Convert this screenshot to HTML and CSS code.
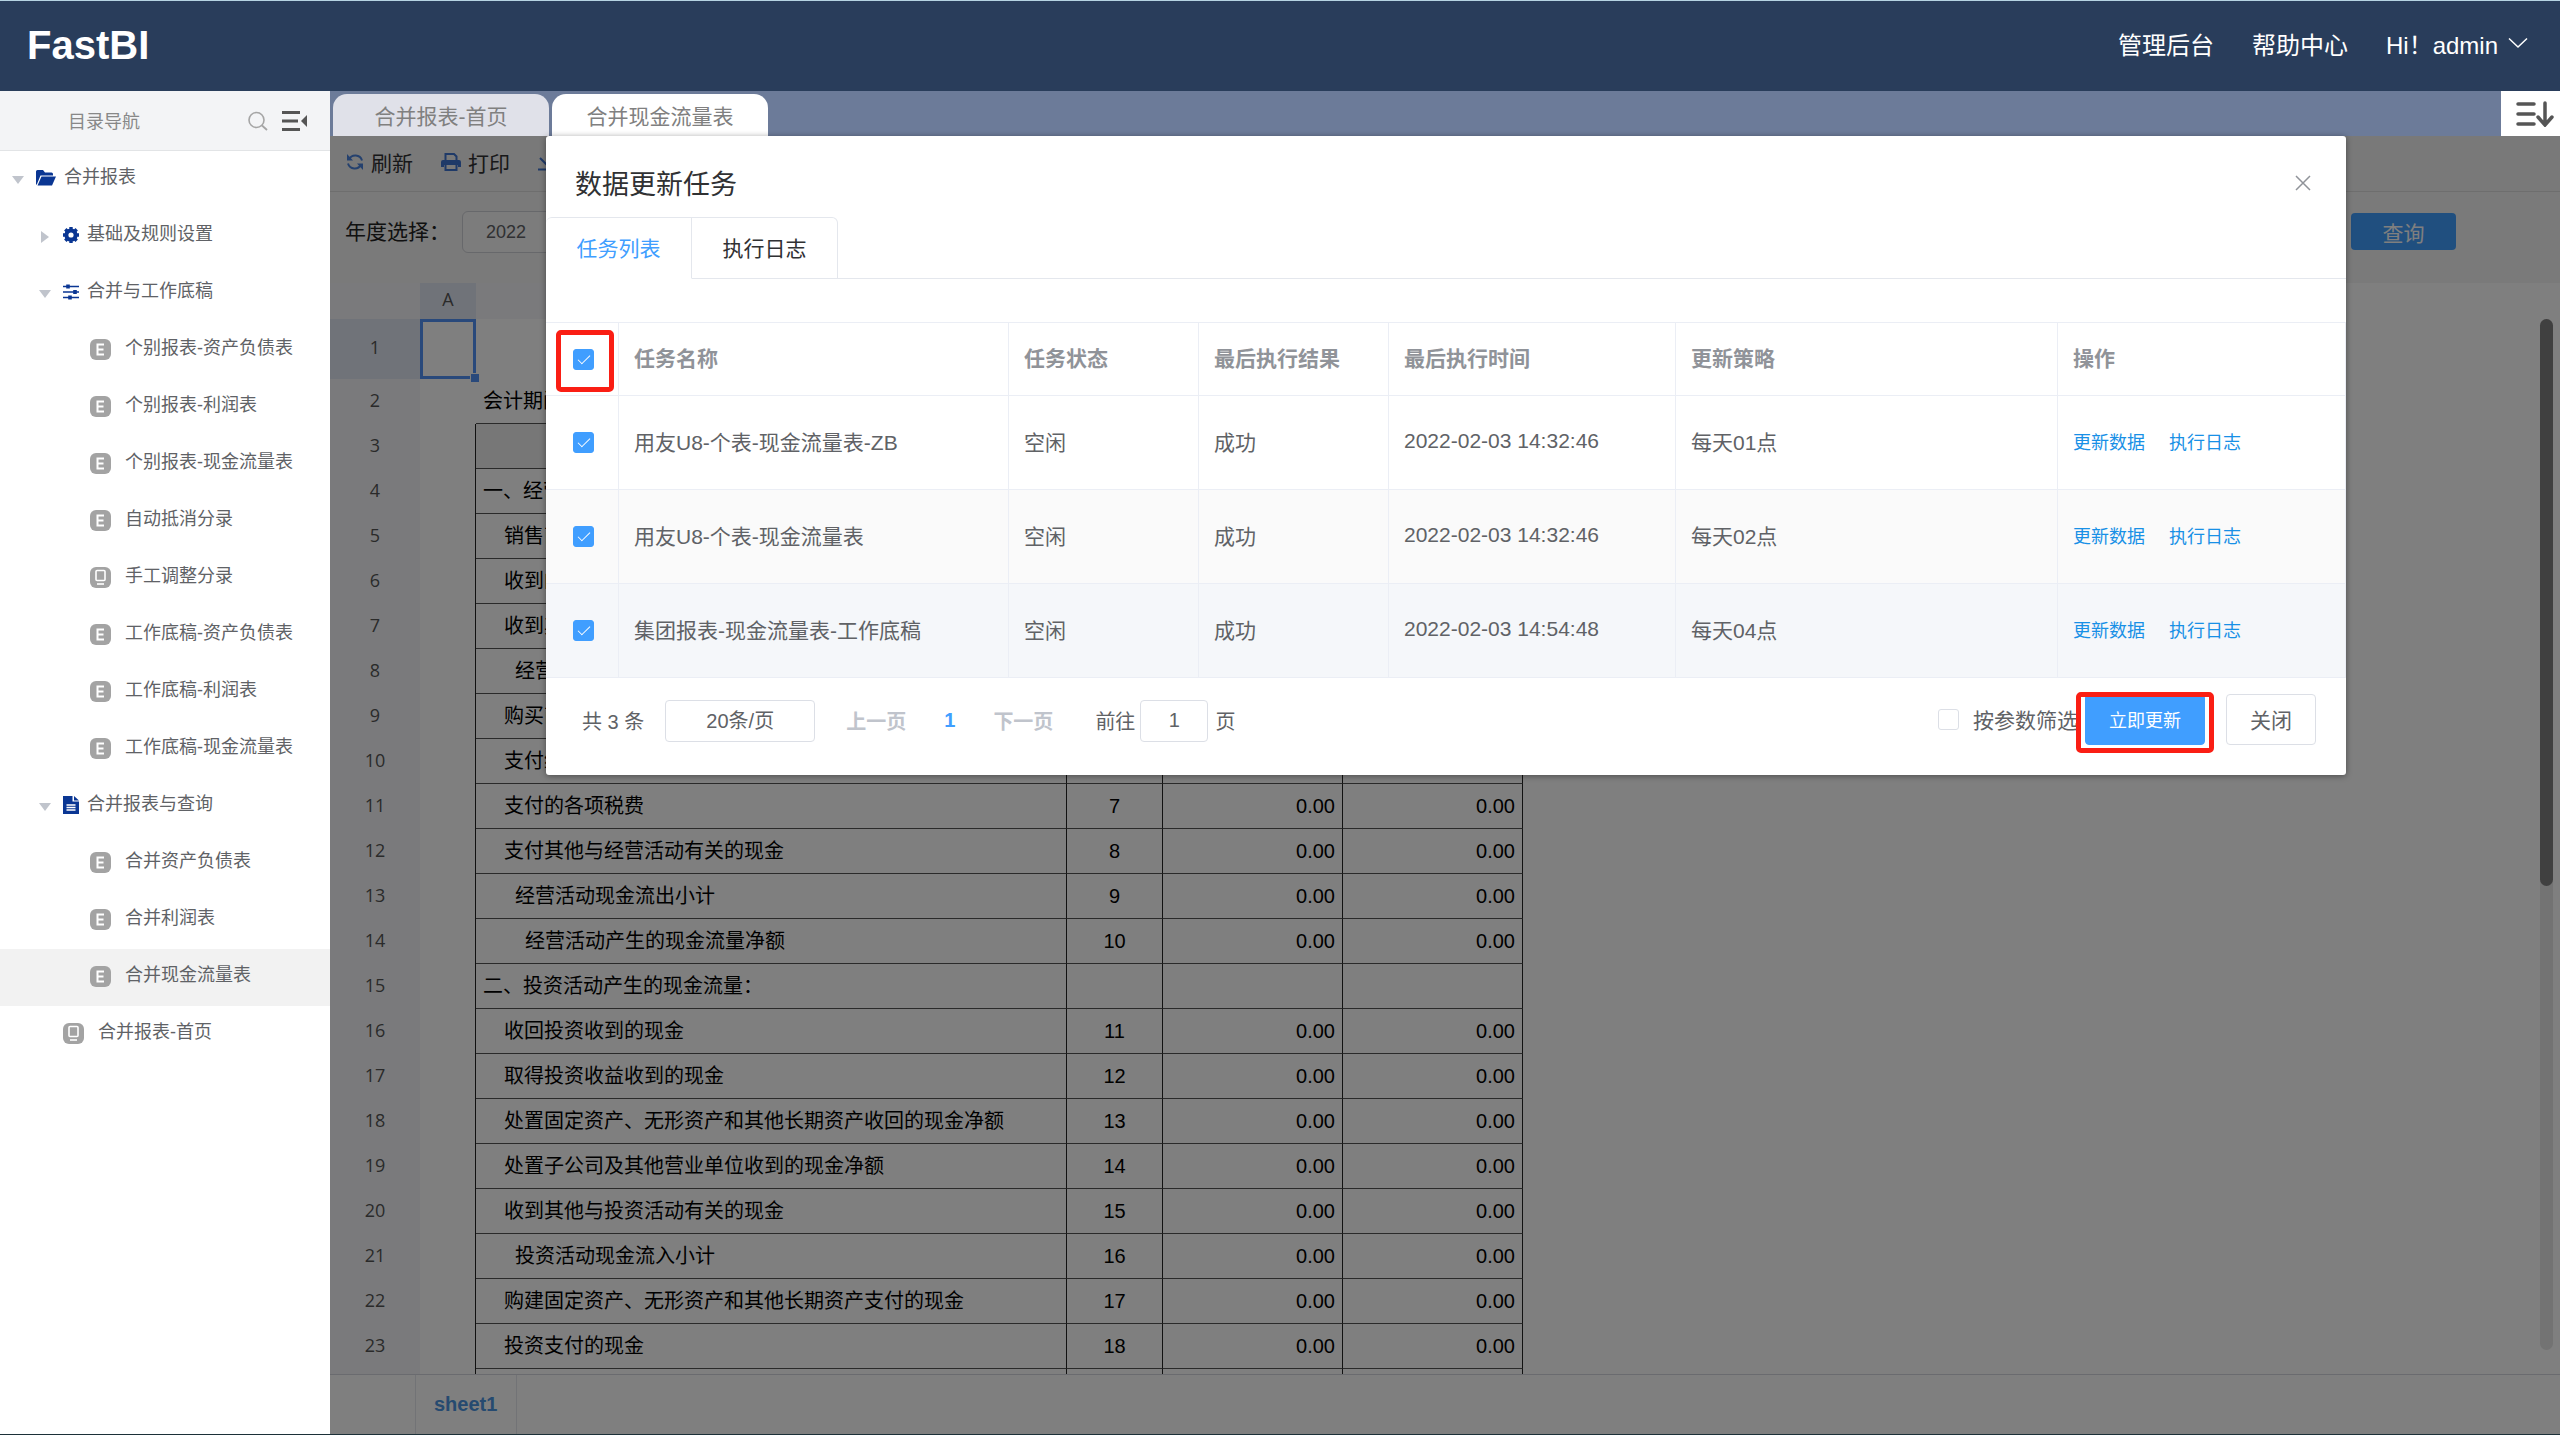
FILE: index.html
```html
<!DOCTYPE html>
<html lang="zh-CN">
<head>
    <meta charset="UTF-8">
    <title>FastBI</title>
    <link rel="stylesheet" href="styles.css">
</head>
<body>
    <!-- 公用图标 -->
    <svg class="sprite" aria-hidden="true">
        <symbol id="i-excel" viewBox="0 0 21 21">
            <rect width="21" height="21" rx="6" fill="#a3a3a3"/>
            <path d="M14 5.5H7.5v10H14M7.5 10.5h6" fill="none" stroke="#fff" stroke-width="2"/>
        </symbol>
        <symbol id="i-board" viewBox="0 0 21 21">
            <rect width="21" height="21" rx="6" fill="#a3a3a3"/>
            <rect x="6" y="3.5" width="9" height="10" rx="1" fill="none" stroke="#fff" stroke-width="1.6"/>
            <path d="M7 17h7" stroke="#fff" stroke-width="1.6"/>
        </symbol>
    </svg>

    <header class="topbar">
        <div class="logo">FastBI</div>
        <nav class="top-links">
            <a href="#">管理后台</a>
            <a href="#">帮助中心</a>
            <button type="button" class="user">Hi！admin
                <svg width="20" height="12" viewBox="0 0 20 12"><path d="M1 1.5l9 8.5 9-8.5" fill="none" stroke="#fff" stroke-width="1.5"/></svg>
            </button>
        </nav>
    </header>

    <div class="layout">
        <aside class="sidebar">
            <div class="side-head">
                <span class="side-title">目录导航</span>
                <button type="button" class="icon-btn" aria-label="搜索">
                    <svg width="20" height="20" viewBox="0 0 20 20"><circle cx="8.5" cy="9" r="7.5" fill="none" stroke="#a5a5a5" stroke-width="1.6"/><path d="M14 14.5l5 4.5" stroke="#a5a5a5" stroke-width="1.8"/></svg>
                </button>
                <button type="button" class="icon-btn" aria-label="收起">
                    <svg width="25" height="22" viewBox="0 0 25 22"><path d="M0 2.5h18M0 11h16M0 19.5h18" stroke="#555" stroke-width="3"/><path d="M25 5v12l-6-6z" fill="#555"/></svg>
                </button>
            </div>
            <nav class="tree">
                <a href="#" class="node lv1">
                    <i class="caret open"></i>
                    <svg width="20" height="16" viewBox="0 0 20 16"><path d="M0 15V1.500Q0 0 1.500 0H7l2 2.500h6.500Q17 2.500 17 4v1.500H4.500L1 14z" fill="#0a3693"/><path d="M5.500 6.500H20l-4 9H1.500z" fill="#0a3693"/></svg>
                    <span>合并报表</span>
                </a>
                <a href="#" class="node lv2">
                    <i class="caret"></i>
                    <svg width="16" height="16" viewBox="0 0 16 16"><circle cx="8" cy="8" r="4.600" fill="none" stroke="#0a3693" stroke-width="4"/><path d="M8 0v3M8 13v3M0 8h3M13 8h3M2.300 2.300l2.200 2.200M11.500 11.500l2.200 2.200M2.300 13.700l2.200-2.200M11.500 4.500l2.200-2.200" stroke="#0a3693" stroke-width="3.400"/></svg>
                    <span>基础及规则设置</span>
                </a>
                <a href="#" class="node lv2">
                    <i class="caret open"></i>
                    <svg width="16" height="16" viewBox="0 0 16 16"><path d="M0 2.500h16M0 8h16M0 13.500h16" stroke="#0a3693" stroke-width="1.600"/><path d="M5 .5v4M12 6v4M7 11.500v4" stroke="#0a3693" stroke-width="3.600"/></svg>
                    <span>合并与工作底稿</span>
                </a>
                <a href="#" class="node lv3"><svg width="21" height="21"><use href="#i-excel"/></svg><span>个别报表-资产负债表</span></a>
                <a href="#" class="node lv3"><svg width="21" height="21"><use href="#i-excel"/></svg><span>个别报表-利润表</span></a>
                <a href="#" class="node lv3"><svg width="21" height="21"><use href="#i-excel"/></svg><span>个别报表-现金流量表</span></a>
                <a href="#" class="node lv3"><svg width="21" height="21"><use href="#i-excel"/></svg><span>自动抵消分录</span></a>
                <a href="#" class="node lv3"><svg width="21" height="21"><use href="#i-board"/></svg><span>手工调整分录</span></a>
                <a href="#" class="node lv3"><svg width="21" height="21"><use href="#i-excel"/></svg><span>工作底稿-资产负债表</span></a>
                <a href="#" class="node lv3"><svg width="21" height="21"><use href="#i-excel"/></svg><span>工作底稿-利润表</span></a>
                <a href="#" class="node lv3"><svg width="21" height="21"><use href="#i-excel"/></svg><span>工作底稿-现金流量表</span></a>
                <a href="#" class="node lv2">
                    <i class="caret open"></i>
                    <svg width="16" height="18" viewBox="0 0 16 18"><path d="M0 0h9.500v5.500H16V18H0z" fill="#0a3693"/><path d="M11 0l5 4.500h-5z" fill="#0a3693"/><path d="M3.500 9h9M3.500 11.500h9M3.500 14h9" stroke="#fff" stroke-width="1.300"/></svg>
                    <span>合并报表与查询</span>
                </a>
                <a href="#" class="node lv3"><svg width="21" height="21"><use href="#i-excel"/></svg><span>合并资产负债表</span></a>
                <a href="#" class="node lv3"><svg width="21" height="21"><use href="#i-excel"/></svg><span>合并利润表</span></a>
                <a href="#" class="node lv3 current"><svg width="21" height="21"><use href="#i-excel"/></svg><span>合并现金流量表</span></a>
                <a href="#" class="node home"><svg width="21" height="21"><use href="#i-board"/></svg><span>合并报表-首页</span></a>
            </nav>
        </aside>

        <main class="main">
            <div class="page-tabs">
                <button type="button" class="page-tab">合并报表-首页</button>
                <button type="button" class="page-tab active">合并现金流量表</button>
                <button type="button" class="tab-menu" aria-label="标签列表">
                    <svg width="39" height="26" viewBox="0 0 39 26"><path d="M2 3h16M2 13h16M2 23h16" stroke="#555" stroke-width="3.500" stroke-linecap="round"/><path d="M29 2v21M22 16l7 8 7-8" fill="none" stroke="#555" stroke-width="3.500" stroke-linecap="round"/></svg>
                </button>
            </div>

            <div class="content">
                <div class="toolbar">
                    <button type="button" class="tool">
                        <svg width="18" height="18" viewBox="0 0 18 18"><path d="M3 6.500A7 7 0 0 1 16 7.500M15 11.500A7 7 0 0 1 2 10.500" fill="none" stroke="#4a82dc" stroke-width="2"/><path d="M1 1v6.500h6zM17 17v-6.500h-6z" fill="#4a82dc"/></svg>
                        <span>刷新</span>
                    </button>
                    <button type="button" class="tool">
                        <svg width="20" height="18" viewBox="0 0 20 18"><path d="M4.500 7V1H13l2.500 2.500V7" fill="none" stroke="#3f74d0" stroke-width="2"/><path d="M0 14V9q0-2 2-2h16q2 0 2 2v5h-3v-2H3v2z" fill="#3f74d0"/><path d="M4.500 12v5h11v-5" fill="none" stroke="#3f74d0" stroke-width="2"/></svg>
                        <span>打印</span>
                    </button>
                    <button type="button" class="tool" aria-label="导出">
                        <svg width="18" height="18" viewBox="0 0 18 18"><path d="M9 0v11M2 5l7 7 7-7M0 16.500h18" fill="none" stroke="#3f74d0" stroke-width="2"/></svg>
                    </button>
                </div>
                <div class="filters">
                    <label for="year">年度选择：</label>
                    <select id="year"><option>2022</option></select>
                    <button type="button" class="query">查询</button>
                </div>

                <div class="sheet">
                    <table class="grid">
                        <colgroup><col class="g-no"><col class="g-a"><col class="g-b"><col class="g-c"><col class="g-d"><col class="g-d"></colgroup>
                        <thead>
                            <tr><th></th><th class="on">A</th><th></th><th></th><th></th><th></th></tr>
                        </thead>
                        <tbody>
                            <tr class="first"><th class="on">1</th><td class="picked"></td><td colspan="4"></td></tr>
                            <tr class="plain"><th>2</th><td></td><td colspan="4">会计期间</td></tr>
                            <tr class="titles"><th>3</th><td></td><td></td><td></td><td></td><td></td></tr>
                            <tr><th>4</th><td></td><td>一、经营</td><td></td><td></td><td></td></tr>
                            <tr><th>5</th><td></td><td class="in1">销售商品</td><td></td><td></td><td></td></tr>
                            <tr><th>6</th><td></td><td class="in1">收到的</td><td></td><td></td><td></td></tr>
                            <tr><th>7</th><td></td><td class="in1">收到其他</td><td></td><td></td><td></td></tr>
                            <tr><th>8</th><td></td><td class="in2">经营</td><td></td><td></td><td></td></tr>
                            <tr><th>9</th><td></td><td class="in1">购买商品</td><td></td><td></td><td></td></tr>
                            <tr><th>10</th><td></td><td class="in1">支付给</td><td></td><td></td><td></td></tr>
                            <tr><th>11</th><td></td><td class="in1">支付的各项税费</td><td>7</td><td>0.00</td><td>0.00</td></tr>
                            <tr><th>12</th><td></td><td class="in1">支付其他与经营活动有关的现金</td><td>8</td><td>0.00</td><td>0.00</td></tr>
                            <tr><th>13</th><td></td><td class="in2">经营活动现金流出小计</td><td>9</td><td>0.00</td><td>0.00</td></tr>
                            <tr><th>14</th><td></td><td class="in3">经营活动产生的现金流量净额</td><td>10</td><td>0.00</td><td>0.00</td></tr>
                            <tr><th>15</th><td></td><td>二、投资活动产生的现金流量：</td><td></td><td></td><td></td></tr>
                            <tr><th>16</th><td></td><td class="in1">收回投资收到的现金</td><td>11</td><td>0.00</td><td>0.00</td></tr>
                            <tr><th>17</th><td></td><td class="in1">取得投资收益收到的现金</td><td>12</td><td>0.00</td><td>0.00</td></tr>
                            <tr><th>18</th><td></td><td class="in1">处置固定资产、无形资产和其他长期资产收回的现金净额</td><td>13</td><td>0.00</td><td>0.00</td></tr>
                            <tr><th>19</th><td></td><td class="in1">处置子公司及其他营业单位收到的现金净额</td><td>14</td><td>0.00</td><td>0.00</td></tr>
                            <tr><th>20</th><td></td><td class="in1">收到其他与投资活动有关的现金</td><td>15</td><td>0.00</td><td>0.00</td></tr>
                            <tr><th>21</th><td></td><td class="in2">投资活动现金流入小计</td><td>16</td><td>0.00</td><td>0.00</td></tr>
                            <tr><th>22</th><td></td><td class="in1">购建固定资产、无形资产和其他长期资产支付的现金</td><td>17</td><td>0.00</td><td>0.00</td></tr>
                            <tr><th>23</th><td></td><td class="in1">投资支付的现金</td><td>18</td><td>0.00</td><td>0.00</td></tr>
                            <tr><th></th><td></td><td></td><td></td><td></td><td></td></tr>
                        </tbody>
                    </table>
                    <div class="scroll"><div class="thumb"></div></div>
                </div>
                <div class="sheet-tabs">
                    <button type="button" class="sheet-tab">sheet1</button>
                </div>

                <div class="mask">
                    <section class="dialog" role="dialog" aria-labelledby="dlg-title">
                        <div class="dialog-head">
                            <h2 id="dlg-title">数据更新任务</h2>
                            <button type="button" class="icon-btn" aria-label="关闭">
                                <svg width="16" height="16" viewBox="0 0 16 16"><path d="M1 1l14 14M15 1L1 15" stroke="#909399" stroke-width="1.500"/></svg>
                            </button>
                        </div>
                        <div class="dialog-tabs">
                            <button type="button" class="dialog-tab active">任务列表</button>
                            <button type="button" class="dialog-tab">执行日志</button>
                        </div>
                        <table class="tasks">
                            <colgroup><col class="t-check"><col class="t-name"><col class="t-short"><col class="t-short"><col class="t-time"><col class="t-plan"><col></colgroup>
                            <thead>
                                <tr>
                                    <th class="pick marked"><input type="checkbox" aria-label="全选" checked></th>
                                    <th>任务名称</th>
                                    <th>任务状态</th>
                                    <th>最后执行结果</th>
                                    <th>最后执行时间</th>
                                    <th>更新策略</th>
                                    <th>操作</th>
                                </tr>
                            </thead>
                            <tbody>
                                <tr>
                                    <td class="pick"><input type="checkbox" aria-label="用友U8-个表-现金流量表-ZB" checked></td>
                                    <td>用友U8-个表-现金流量表-ZB</td>
                                    <td>空闲</td>
                                    <td>成功</td>
                                    <td>2022-02-03 14:32:46</td>
                                    <td>每天01点</td>
                                    <td class="ops"><a href="#">更新数据</a><a href="#">执行日志</a></td>
                                </tr>
                                <tr class="striped">
                                    <td class="pick"><input type="checkbox" aria-label="用友U8-个表-现金流量表" checked></td>
                                    <td>用友U8-个表-现金流量表</td>
                                    <td>空闲</td>
                                    <td>成功</td>
                                    <td>2022-02-03 14:32:46</td>
                                    <td>每天02点</td>
                                    <td class="ops"><a href="#">更新数据</a><a href="#">执行日志</a></td>
                                </tr>
                                <tr class="hovered">
                                    <td class="pick"><input type="checkbox" aria-label="集团报表-现金流量表-工作底稿" checked></td>
                                    <td>集团报表-现金流量表-工作底稿</td>
                                    <td>空闲</td>
                                    <td>成功</td>
                                    <td>2022-02-03 14:54:48</td>
                                    <td>每天04点</td>
                                    <td class="ops"><a href="#">更新数据</a><a href="#">执行日志</a></td>
                                </tr>
                            </tbody>
                        </table>
                        <div class="dialog-foot">
                            <div class="pager">
                                <span class="total">共 3 条</span>
                                <select class="page-size" aria-label="每页条数"><option>20条/页</option></select>
                                <button type="button" class="page-btn" disabled>上一页</button>
                                <button type="button" class="page-btn now">1</button>
                                <button type="button" class="page-btn" disabled>下一页</button>
                                <label for="goto">前往</label>
                                <input type="text" id="goto" value="1">
                                <span>页</span>
                            </div>
                            <div class="actions">
                                <input type="checkbox" id="by-param">
                                <label for="by-param">按参数筛选</label>
                                <div class="run marked"><button type="button" class="btn primary">立即更新</button></div>
                                <button type="button" class="btn">关闭</button>
                            </div>
                        </div>
                    </section>
                </div>
            </div>
        </main>
    </div>
</body>
</html>
```
FILE: styles.css
```css
* {
    box-sizing: border-box;
}
body {
    display: flex;
    flex-direction: column;
    height: 100vh;
    margin: 0;
    border-top: 1px solid #b5d3e2;
    border-bottom: 1px solid #1c3038;
    overflow: hidden;
    font-family: "Liberation Sans", "Noto Sans CJK SC", sans-serif;
    font-size: 21px;
    color: #606266;
    background: #fff;
}
a {
    color: inherit;
    text-decoration: none;
}
button, select, input {
    margin: 0;
    font-family: inherit;
    font-size: inherit;
    color: inherit;
}
button {
    padding: 0;
    border: none;
    background: none;
    cursor: pointer;
}
.sprite {
    position: absolute;
    width: 0;
    height: 0;
}
.icon-btn {
    display: flex;
}

/* 顶部 */
.topbar {
    display: flex;
    flex: none;
    align-items: center;
    justify-content: space-between;
    height: 90px;
    padding: 0 32px 2px 27px;
    color: #fff;
    background: #293d5b;
}
.logo {
    font-size: 40px;
    font-weight: bold;
}
.top-links {
    display: flex;
    align-items: center;
    gap: 38px;
    padding-bottom: 4px;
    font-size: 24px;
}
.user {
    display: flex;
    align-items: center;
    gap: 10px;
}

.layout {
    display: flex;
    flex: 1;
    min-height: 0;
}

/* 左侧目录 */
.sidebar {
    flex: none;
    width: 330px;
    font-size: 18px;
    background: #fff;
}
.side-head {
    display: flex;
    align-items: center;
    gap: 14px;
    height: 60px;
    padding: 0 23px 0 68px;
    color: #888;
    border-bottom: 1px solid #e2e4e6;
    background: #f3f4f6;
}
.side-title {
    flex: 1;
    padding-bottom: 2px;
}
.node {
    display: flex;
    align-items: center;
    gap: 8px;
    height: 57px;
    padding-bottom: 3px;
    line-height: 24px;
}
.node span {
    padding-bottom: 2px;
}
.lv1 { padding-left: 8px; }
.lv2 { padding-left: 35px; }
.lv3 { padding-left: 90px; gap: 14px; }
.home { padding-left: 63px; gap: 14px; }
.node.current {
    background: #f2f2f2;
}
.caret {
    display: flex;
    justify-content: center;
    width: 20px;
    padding-top: 4px;
}
.caret::before {
    content: "";
    border: 6px solid transparent;
    border-right-width: 0;
    border-left: 8px solid #c0c4cc;
}
.caret.open::before {
    border: 6px solid transparent;
    border-bottom-width: 0;
    border-top: 8px solid #c0c4cc;
}

/* 页签 */
.main {
    display: flex;
    flex: 1;
    flex-direction: column;
    min-width: 0;
}
.page-tabs {
    display: flex;
    flex: none;
    align-items: flex-end;
    gap: 3px;
    height: 45px;
    padding-left: 3px;
    background: #6c7b99;
}
.page-tab {
    width: 216px;
    height: 42px;
    color: #808080;
    border-radius: 14px 14px 0 0;
    background: #e0e1e9;
}
.page-tab.active {
    background: #fff;
}
.tab-menu {
    display: flex;
    align-items: center;
    justify-content: flex-end;
    width: 59px;
    height: 45px;
    padding-right: 5px;
    margin-left: auto;
    background: #fff;
}

.content {
    display: flex;
    position: relative;
    flex: 1;
    flex-direction: column;
    min-height: 0;
}
.toolbar {
    display: flex;
    flex: none;
    align-items: center;
    gap: 28px;
    height: 56px;
    padding: 0 0 4px 16px;
    color: #303133;
    border-bottom: 1px solid #dcdcdc;
    background: #f2f2f2;
}
.tool {
    display: flex;
    align-items: center;
    gap: 7px;
}
.filters {
    display: flex;
    flex: none;
    align-items: center;
    height: 91px;
    padding: 0 104px 12px 15px;
    color: #222;
    background: #f4f4f4;
}
.filters label {
    padding-bottom: 3px;
}
.filters select {
    width: 200px;
    height: 42px;
    margin-left: 12px;
    padding: 0 23px;
    font-size: 18px;
    color: #606266;
    border: 1px solid #cfd1d6;
    border-radius: 6px;
    appearance: none;
    background: #f8f8f8;
}
.query {
    width: 105px;
    height: 37px;
    margin-left: auto;
    color: #fff;
    border-radius: 4px;
    background: #409eff;
}

/* 表格 */
.sheet {
    display: flex;
    flex: 1;
    justify-content: space-between;
    min-height: 0;
    overflow: hidden;
}
.grid {
    flex: none;
    width: 1193px;
    height: 1px;
    table-layout: fixed;
    border-collapse: separate;
    border-spacing: 0;
    font-size: 20px;
    color: #000;
}
.g-no { width: 90px; }
.g-a { width: 56px; }
.g-b { width: 591px; }
.g-c { width: 96px; }
.g-d { width: 180px; }
.grid th {
    padding: 0 0 4px;
    font-family: "Open Sans", sans-serif;
    font-size: 18px;
    font-weight: normal;
    line-height: 24px;
    color: #555;
    background: #f4f5f9;
}
.grid th.on {
    background: #e1e6f2;
}
.grid thead tr {
    height: 36px;
}
.grid tbody tr {
    height: 45px;
}
.grid tbody tr.first {
    height: 60px;
}
.grid td {
    padding: 0 7px;
    line-height: 28px;
    white-space: nowrap;
    border-right: 1px solid #222;
    border-bottom: 1px solid #555;
}
.grid td:nth-child(2) {
    border-bottom: none;
}
.grid .first td, .grid .plain td {
    border-right: none;
}
.grid .first td {
    border-bottom: none;
}
.grid td.in1 { padding-left: 28px; }
.grid td.in2 { padding-left: 39px; }
.grid td.in3 { padding-left: 49px; }
.grid td:nth-child(4) {
    text-align: center;
}
.grid td:nth-child(n+5) {
    padding-right: 7px;
    text-align: right;
}
.titles td:nth-child(n+3) {
    background: #eee;
}
.grid td.picked {
    position: relative;
    box-shadow: inset 0 0 0 3px #5292f7;
}
.picked::after {
    content: "";
    position: absolute;
    right: -4px;
    bottom: -4px;
    width: 8px;
    height: 8px;
    border: 1px solid #fff;
    background: #5292f7;
}
.scroll {
    width: 13px;
    margin: 36px 7px 24px 0;
    border-radius: 7px;
    background: #e6e6e6;
}
.thumb {
    height: 55%;
    border-radius: 7px;
    background: #808080;
}
.sheet-tabs {
    display: flex;
    flex: none;
    height: 60px;
    padding-left: 85px;
    border-top: 1px solid #d4d7de;
    background: #fff;
}
.sheet-tab {
    padding: 0 19px 0 18px;
    font-size: 20px;
    font-weight: bold;
    color: #4c94e0;
    border: solid #e4e7ed;
    border-width: 0 1px;
}

/* 弹窗 */
.mask {
    position: absolute;
    inset: 0;
    padding-left: 2px;
    background: rgba(0, 0, 0, 0.5);
}
.dialog {
    width: 90%;
    max-width: 1800px;
    margin: 0 auto;
    border-radius: 3px;
    background: #fff;
    box-shadow: 0 1px 6px rgba(0, 0, 0, 0.4);
}
.dialog-head {
    display: flex;
    align-items: center;
    justify-content: space-between;
    height: 81px;
    padding: 12px 35px 0 29px;
}
.dialog-head h2 {
    margin: 0;
    font-size: 27px;
    font-weight: normal;
    color: #303133;
}
.dialog-tabs {
    display: flex;
    height: 62px;
    border-bottom: 1px solid #e4e7ed;
}
.dialog-tab {
    width: 146px;
    height: 62px;
    padding-bottom: 3px;
    color: #303133;
    border: 1px solid #e4e7ed;
    border-left: none;
    border-radius: 0 6px 0 0;
}
.dialog-tab.active {
    color: #409eff;
    border-bottom-color: #fff;
    border-radius: 6px 0 0 0;
}
.tasks {
    width: 100%;
    margin-top: 43px;
    table-layout: fixed;
    border-collapse: separate;
    border-spacing: 0;
    border-top: 1px solid #ebeef5;
}
.t-check { width: 73px; }
.t-name { width: 390px; }
.t-short { width: 190px; }
.t-time { width: 287px; }
.t-plan { width: 382px; }
.tasks th, .tasks td {
    height: 94px;
    padding: 0 15px 4px;
    text-align: left;
    border-right: 1px solid #ebeef5;
    border-bottom: 1px solid #ebeef5;
}
.tasks th {
    height: 73px;
    color: #909399;
}
.tasks .pick {
    padding: 0 0 0 27px;
}
.striped {
    background: #fafafa;
}
.hovered {
    background: #f5f7fa;
}
.ops a {
    margin-right: 24px;
    font-size: 18px;
    color: #1890e6;
}
input[type="checkbox"] {
    display: block;
    width: 21px;
    height: 21px;
    border: 1px solid #dcdfe6;
    border-radius: 3px;
    appearance: none;
    background: #fff;
}
input[type="checkbox"]:checked {
    border-color: #409eff;
    background: #409eff;
}
input[type="checkbox"]:checked::after {
    content: "";
    display: block;
    width: 5px;
    height: 11px;
    margin: 2px 0 0 7px;
    border: solid #fff;
    border-width: 0 1px 1px 0;
    transform: rotate(45deg);
}
/* 红框标注 */
.marked {
    position: relative;
}
.marked::after {
    content: "";
    position: absolute;
    inset: 7px 4px 3px 10px;
    border: 5px solid #fa1e14;
    border-radius: 5px;
    pointer-events: none;
}
.run.marked::after {
    inset: -2px -9px -8px;
}

.dialog-foot {
    display: flex;
    justify-content: space-between;
    height: 97px;
    padding: 16px 30px 0 36px;
}
.pager {
    display: flex;
    align-items: center;
    height: 53px;
    font-size: 20px;
}
.pager label {
    margin-left: 4px;
}
.total {
    margin-right: 21px;
}
.page-size, .pager input {
    height: 42px;
    padding: 0;
    text-align: center;
    text-align-last: center;
    border: 1px solid #dcdfe6;
    border-radius: 4px;
    appearance: none;
    background: #fff;
}
.page-size {
    width: 150px;
    margin-right: 31px;
}
.pager input {
    width: 68px;
    margin: 0 7px 0 5px;
}
.page-btn {
    margin-right: 38px;
    font-weight: bold;
    color: #c0c4cc;
}
.page-btn.now {
    color: #409eff;
}
.actions {
    display: flex;
    align-items: center;
    height: 51px;
}
.actions label {
    margin: 0 7px 0 14px;
    padding-bottom: 2px;
}
.btn {
    height: 51px;
    padding: 0 23px 2px;
    border: 1px solid #dcdfe6;
    border-radius: 4px;
    background: #fff;
}
.btn.primary {
    margin: 0;
    font-size: 18px;
    color: #fff;
    border-color: #409eff;
    background: #409eff;
}
.run {
    margin-right: 21px;
}
```
